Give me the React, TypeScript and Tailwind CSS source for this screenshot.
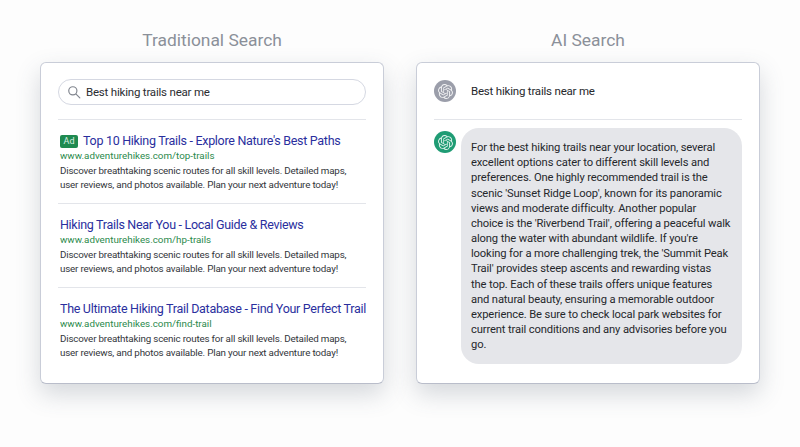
const openAiPath =
  'M22.2819 9.8211a5.9847 5.9847 0 0 0-.5157-4.9108 6.0462 6.0462 0 0 0-6.5098-2.9A6.0651 6.0651 0 0 0 4.9807 4.1818a5.9847 5.9847 0 0 0-3.9977 2.9 6.0462 6.0462 0 0 0 .7427 7.0966 5.98 5.98 0 0 0 .511 4.9107 6.051 6.051 0 0 0 6.5146 2.9001A5.9847 5.9847 0 0 0 13.2599 24a6.0557 6.0557 0 0 0 5.7718-4.2058 5.9894 5.9894 0 0 0 3.9977-2.9001 6.0557 6.0557 0 0 0-.7475-7.0729zm-9.022 12.6081a4.4755 4.4755 0 0 1-2.8764-1.0408l.1419-.0804 4.7783-2.7582a.7948.7948 0 0 0 .3927-.6813v-6.7369l2.02 1.1686a.071.071 0 0 1 .038.052v5.5826a4.504 4.504 0 0 1-4.4945 4.4944zm-9.6607-4.1254a4.4708 4.4708 0 0 1-.5346-3.0137l.142.0852 4.783 2.7582a.7712.7712 0 0 0 .7806 0l5.8428-3.3685v2.3324a.0804.0804 0 0 1-.0332.0615L9.74 19.9502a4.4992 4.4992 0 0 1-6.1408-1.6464zM2.3408 7.8956a4.485 4.485 0 0 1 2.3655-1.9728V11.6a.7664.7664 0 0 0 .3879.6765l5.8144 3.3543-2.0201 1.1685a.0757.0757 0 0 1-.071 0l-4.8303-2.7865A4.504 4.504 0 0 1 2.3408 7.872zm16.5963 3.8558L13.1038 8.364 15.1192 7.2a.0757.0757 0 0 1 .071 0l4.8303 2.7913a4.4944 4.4944 0 0 1-.6765 8.1042v-5.6772a.79.79 0 0 0-.407-.667zm2.0107-3.0231l-.142-.0852-4.7735-2.7818a.7759.7759 0 0 0-.7854 0L9.409 9.2297V6.8974a.0662.0662 0 0 1 .0284-.0615l4.8303-2.7866a4.4992 4.4992 0 0 1 6.6802 4.66zM8.3065 12.863l-2.02-1.1638a.0804.0804 0 0 1-.038-.0567V6.0742a4.4992 4.4992 0 0 1 7.3757-3.4537l-.142.0805L8.704 5.459a.7948.7948 0 0 0-.3927.6813zm1.0976-2.3654l2.602-1.4998 2.6069 1.4998v2.9994l-2.5974 1.4997-2.6067-1.4997Z'

const results = [
  { ad: true, title: "Top 10 Hiking Trails - Explore Nature's Best Paths", url: 'www.adventurehikes.com/top-trails' },
  { ad: false, title: 'Hiking Trails Near You - Local Guide & Reviews', url: 'www.adventurehikes.com/hp-trails' },
  { ad: false, title: 'The Ultimate Hiking Trail Database - Find Your Perfect Trail', url: 'www.adventurehikes.com/find-trail' },
]

const answer = [
  'For the best hiking trails near your location, several',
  'excellent options cater to different skill levels and',
  'preferences. One highly recommended trail is the',
  "scenic 'Sunset Ridge Loop', known for its panoramic",
  'views and moderate difficulty. Another popular',
  "choice is the 'Riverbend Trail', offering a peaceful walk",
  "along the water with abundant wildlife. If you're",
  "looking for a more challenging trek, the 'Summit Peak",
  "Trail' provides steep ascents and rewarding vistas",
  'the top. Each of these trails offers unique features',
  'and natural beauty, ensuring a memorable outdoor',
  'experience. Be sure to check local park websites for',
  'current trail conditions and any advisories before you',
  'go.',
]

function Avatar({ className }: { className: string }) {
  return (
    <div className={`w-[22px] h-[22px] rounded-full flex items-center justify-center shrink-0 ${className}`}>
      <svg viewBox="0 0 24 24" className="w-[15px] h-[15px] fill-white/85">
        <path d={openAiPath} />
      </svg>
    </div>
  )
}

export default function App() {
  return (
    <div className="w-[800px] h-[447px] overflow-hidden bg-[#fdfdfd] flex justify-center gap-[32px] pt-[28px] font-['Roboto',sans-serif]">
      {/* Traditional */}
      <div className="w-[344px]">
        <h2 className="h-[25px] leading-[25px] text-center text-[17.4px] text-[#8b9099] mb-[9px]">Traditional Search</h2>
        <div className="h-[322px] bg-white rounded-[6px] border border-[#c9cdd8] border-b-[#b9bdca] shadow-[0_10px_24px_rgba(70,80,100,0.22)] px-[17px] pt-[16px]">
          <div className="h-[26px] rounded-full border border-[#d5d8e2] flex items-center pl-[8px] gap-[5px]">
            <svg viewBox="0 0 24 24" className="w-[14px] h-[14px] fill-none stroke-[#80858e] stroke-2" strokeLinecap="round">
              <circle cx="10" cy="10" r="7" />
              <path d="M15.5 15.5 22 22" />
            </svg>
            <span className="text-[11.5px] tracking-[-0.2px] text-[#2b2d31] pt-[1px]">Best hiking trails near me</span>
          </div>
          <div className="mt-[14px]">
            {results.map(r => (
              <div key={r.url} className="h-[84px] border-t border-[#e3e5ea] pl-[2px] pt-[13px]">
                <div className="flex items-center gap-[5px] h-[17px] whitespace-nowrap">
                  {r.ad && (
                    <span className="w-[18px] h-[13px] rounded-[2px] bg-[#1f8a50] text-[#d8efe2] text-[9px] leading-[13px] text-center">Ad</span>
                  )}
                  <span className="text-[12.5px] tracking-[-0.3px] text-[#2a2f9e]">{r.title}</span>
                </div>
                <p className="text-[9.8px] leading-[14px] text-[#2b8a4c] mt-[-1px]">{r.url}</p>
                <p className="text-[9.8px] tracking-[-0.18px] leading-[14px] text-[#33363b] whitespace-nowrap mt-[1px]">
                  Discover breathtaking scenic routes for all skill levels. Detailed maps,
                  <br />
                  user reviews, and photos available. Plan your next adventure today!
                </p>
              </div>
            ))}
          </div>
        </div>
      </div>

      {/* AI */}
      <div className="w-[344px]">
        <h2 className="h-[25px] leading-[25px] text-center text-[17.4px] text-[#8b9099] mb-[9px]">AI Search</h2>
        <div className="h-[322px] bg-white rounded-[6px] border border-[#c9cdd8] border-b-[#b9bdca] shadow-[0_10px_24px_rgba(70,80,100,0.22)] px-[17px]">
          <div className="h-[57px] flex items-center gap-[15px] border-b border-[#e3e5ea]">
            <Avatar className="bg-[#9b9eaa]" />
            <span className="text-[11.5px] tracking-[-0.2px] text-[#26282c] pt-[1px]">Best hiking trails near me</span>
          </div>
          <div className="flex gap-[5px] pt-[8px]">
            <Avatar className="bg-[#1f9c74] mt-[3px]" />
            <div className="w-[281px] h-[236px] rounded-[18px] bg-[#e5e6ea] pl-[10px] py-[12px]">
              {answer.map(line => (
                <p key={line} className="text-[11.2px] tracking-[-0.13px] leading-[15.17px] text-[#26282c] whitespace-nowrap">{line}</p>
              ))}
            </div>
          </div>
        </div>
      </div>
    </div>
  )
}
